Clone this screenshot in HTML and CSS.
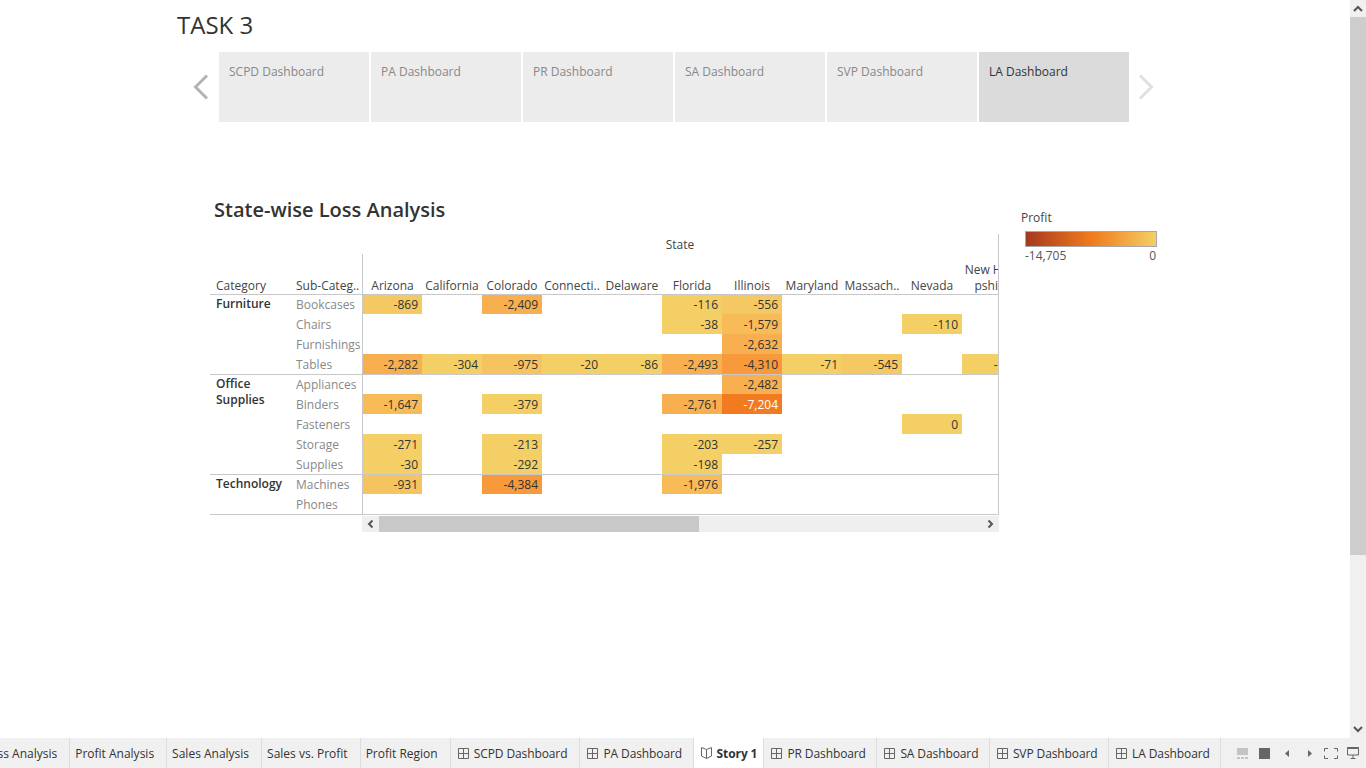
FILE: index.html
```html
<!DOCTYPE html>
<html lang="en">
<head>
    <meta charset="UTF-8">
    <meta name="viewport" content="width=device-width, initial-scale=1.0">
    <title>TASK 3</title>
    <link rel="stylesheet" href="styles.css">
</head>
<body>
    <div class="workspace">
        <main class="story">
            <h1 class="story-title">TASK 3</h1>

            <nav class="story-nav">
                <svg class="nav-arrow" width="18" height="26" viewBox="0 0 18 26"><path d="M15 1.5 L3.5 13 L15 24.5" fill="none" stroke="#b4b4b4" stroke-width="3"/></svg>
                <div class="tiles">
                    <a class="tile">SCPD Dashboard</a>
                    <a class="tile">PA Dashboard</a>
                    <a class="tile">PR Dashboard</a>
                    <a class="tile">SA Dashboard</a>
                    <a class="tile">SVP Dashboard</a>
                    <a class="tile active">LA Dashboard</a>
                </div>
                <svg class="nav-arrow next" width="18" height="26" viewBox="0 0 18 26"><path d="M3 1.5 L14.5 13 L3 24.5" fill="none" stroke="#e0e0e0" stroke-width="3"/></svg>
            </nav>

            <section class="dashboard">
                <div class="sheet">
                    <h2 class="sheet-title">State-wise Loss Analysis</h2>
                    <div class="crosstab">
                        <table>
                            <colgroup>
                                <col class="w-cat">
                                <col class="w-sub">
                                <col class="w-state-first">
                                <col span="10" class="w-state">
                            </colgroup>
                            <thead>
                                <tr class="field-row">
                                    <th colspan="2"></th>
                                    <th class="state-label" colspan="11">State</th>
                                </tr>
                                <tr class="head-row">
                                    <th class="left">Category</th>
                                    <th class="left divider">Sub-Categ..</th>
                                    <th>Arizona</th>
                                    <th>California</th>
                                    <th>Colorado</th>
                                    <th>Connecti..</th>
                                    <th>Delaware</th>
                                    <th>Florida</th>
                                    <th>Illinois</th>
                                    <th>Maryland</th>
                                    <th>Massach..</th>
                                    <th>Nevada</th>
                                    <th>New Ham<br>pshire</th>
                                </tr>
                            </thead>
                            <tbody>
                                <tr class="first">
                                    <td class="cat" rowspan="4">Furniture</td>
                                    <td class="sub">Bookcases</td>
                                    <td class="heat-2">-869</td><td></td><td class="heat-5">-2,409</td><td></td><td></td><td class="heat-1">-116</td><td class="heat-2">-556</td><td></td><td></td><td></td><td></td>
                                </tr>
                                <tr>
                                    <td class="sub">Chairs</td>
                                    <td></td><td></td><td></td><td></td><td></td><td class="heat-1">-38</td><td class="heat-4">-1,579</td><td></td><td></td><td class="heat-1">-110</td><td></td>
                                </tr>
                                <tr>
                                    <td class="sub">Furnishings</td>
                                    <td></td><td></td><td></td><td></td><td></td><td></td><td class="heat-5">-2,632</td><td></td><td></td><td></td><td></td>
                                </tr>
                                <tr>
                                    <td class="sub">Tables</td>
                                    <td class="heat-5">-2,282</td><td class="heat-1">-304</td><td class="heat-3">-975</td><td class="heat-1">-20</td><td class="heat-1">-86</td><td class="heat-5">-2,493</td><td class="heat-6">-4,310</td><td class="heat-1">-71</td><td class="heat-2">-545</td><td></td><td class="heat-1">-118</td>
                                </tr>
                                <tr class="first">
                                    <td class="cat" rowspan="5">Office<br>Supplies</td>
                                    <td class="sub">Appliances</td>
                                    <td></td><td></td><td></td><td></td><td></td><td></td><td class="heat-5">-2,482</td><td></td><td></td><td></td><td></td>
                                </tr>
                                <tr>
                                    <td class="sub">Binders</td>
                                    <td class="heat-4">-1,647</td><td></td><td class="heat-1">-379</td><td></td><td></td><td class="heat-5">-2,761</td><td class="heat-7">-7,204</td><td></td><td></td><td></td><td></td>
                                </tr>
                                <tr>
                                    <td class="sub">Fasteners</td>
                                    <td></td><td></td><td></td><td></td><td></td><td></td><td></td><td></td><td></td><td class="heat-1">0</td><td></td>
                                </tr>
                                <tr>
                                    <td class="sub">Storage</td>
                                    <td class="heat-1">-271</td><td></td><td class="heat-1">-213</td><td></td><td></td><td class="heat-1">-203</td><td class="heat-1">-257</td><td></td><td></td><td></td><td></td>
                                </tr>
                                <tr>
                                    <td class="sub">Supplies</td>
                                    <td class="heat-1">-30</td><td></td><td class="heat-1">-292</td><td></td><td></td><td class="heat-1">-198</td><td></td><td></td><td></td><td></td><td></td>
                                </tr>
                                <tr class="first">
                                    <td class="cat" rowspan="2">Technology</td>
                                    <td class="sub">Machines</td>
                                    <td class="heat-3">-931</td><td></td><td class="heat-6">-4,384</td><td></td><td></td><td class="heat-4">-1,976</td><td></td><td></td><td></td><td></td><td></td>
                                </tr>
                                <tr>
                                    <td class="sub">Phones</td>
                                    <td></td><td></td><td></td><td></td><td></td><td></td><td></td><td></td><td></td><td></td><td></td>
                                </tr>
                            </tbody>
                        </table>
                    </div>
                    <div class="hscroll">
                        <span class="hscroll-btn"><svg width="7" height="8" viewBox="0 0 7 8"><path d="M5.5 .5 L2 4 L5.5 7.5" fill="none" stroke="#555" stroke-width="2"/></svg></span>
                        <span class="hscroll-thumb"></span>
                        <span class="hscroll-btn end"><svg width="7" height="8" viewBox="0 0 7 8"><path d="M1.5 .5 L5 4 L1.5 7.5" fill="none" stroke="#555" stroke-width="2"/></svg></span>
                    </div>
                </div>

                <aside class="legend">
                    <div class="legend-title">Profit</div>
                    <div class="legend-ramp"></div>
                    <div class="legend-scale"><span>-14,705</span><span>0</span></div>
                </aside>
            </section>
        </main>

        <div class="vscroll">
            <span class="vscroll-btn"><svg width="10" height="7" viewBox="0 0 10 7"><path d="M1 6 L5 2 L9 6" fill="none" stroke="#555" stroke-width="2"/></svg></span>
            <span class="vscroll-thumb"></span>
            <span class="vscroll-btn"><svg width="10" height="7" viewBox="0 0 10 7"><path d="M1 1 L5 5 L9 1" fill="none" stroke="#555" stroke-width="2"/></svg></span>
        </div>
    </div>

    <footer class="tabbar">
        <div class="tabs">
            <a class="tab clipped">Loss Analysis</a>
            <a class="tab">Profit Analysis</a>
            <a class="tab">Sales Analysis</a>
            <a class="tab">Sales vs. Profit</a>
            <a class="tab">Profit Region</a>
            <a class="tab with-icon scpd"><svg class="tab-icon" width="11" height="11" viewBox="0 0 11 11"><path d="M.5 .5 H10.5 V10.5 H.5 Z M5.5 .5 V10.5 M.5 5.5 H10.5" fill="none" stroke="#666"/></svg>SCPD Dashboard</a>
            <a class="tab with-icon"><svg class="tab-icon" width="11" height="11" viewBox="0 0 11 11"><path d="M.5 .5 H10.5 V10.5 H.5 Z M5.5 .5 V10.5 M.5 5.5 H10.5" fill="none" stroke="#666"/></svg>PA Dashboard</a>
            <a class="tab with-icon current"><svg class="tab-icon" width="11" height="12" viewBox="0 0 11 12"><path d="M5.5 2.5 L.5 .5 V9 L5.5 11.5 L10.5 9 V.5 Z M5.5 2.5 V11.5" fill="none" stroke="#666"/></svg>Story 1</a>
            <a class="tab with-icon"><svg class="tab-icon" width="11" height="11" viewBox="0 0 11 11"><path d="M.5 .5 H10.5 V10.5 H.5 Z M5.5 .5 V10.5 M.5 5.5 H10.5" fill="none" stroke="#666"/></svg>PR Dashboard</a>
            <a class="tab with-icon"><svg class="tab-icon" width="11" height="11" viewBox="0 0 11 11"><path d="M.5 .5 H10.5 V10.5 H.5 Z M5.5 .5 V10.5 M.5 5.5 H10.5" fill="none" stroke="#666"/></svg>SA Dashboard</a>
            <a class="tab with-icon"><svg class="tab-icon" width="11" height="11" viewBox="0 0 11 11"><path d="M.5 .5 H10.5 V10.5 H.5 Z M5.5 .5 V10.5 M.5 5.5 H10.5" fill="none" stroke="#666"/></svg>SVP Dashboard</a>
            <a class="tab with-icon"><svg class="tab-icon" width="11" height="11" viewBox="0 0 11 11"><path d="M.5 .5 H10.5 V10.5 H.5 Z M5.5 .5 V10.5 M.5 5.5 H10.5" fill="none" stroke="#666"/></svg>LA Dashboard</a>
        </div>
        <div class="controls">
            <svg width="11" height="11" viewBox="0 0 11 11"><path d="M0 0 H11 V7 H0 Z" fill="#c4c4c4"/><path d="M0 9 H3 V11 H0 Z M4 9 H7 V11 H4 Z M8 9 H11 V11 H8 Z" fill="#c4c4c4"/></svg>
            <svg width="11" height="11" viewBox="0 0 11 11"><path d="M0 0 H11 V11 H0 Z" fill="#666"/></svg>
            <svg class="ctl-step" width="4" height="7" viewBox="0 0 4 7"><path d="M4 0 V7 L0 3.5 Z" fill="#666"/></svg>
            <svg class="ctl-step right" width="4" height="7" viewBox="0 0 4 7"><path d="M0 0 V7 L4 3.5 Z" fill="#666"/></svg>
            <svg class="ctl-full" width="14" height="11" viewBox="0 0 14 11"><path d="M.5 3.5 V.5 H4 M10 .5 H13.5 V3.5 M13.5 7.5 V10.5 H10 M4 10.5 H.5 V7.5" fill="none" stroke="#666"/></svg>
            <svg class="ctl-screen" width="12" height="12" viewBox="0 0 12 12"><path d="M.5 1.5 H11.5 V8 H.5 Z" fill="none" stroke="#666"/><path d="M0 0 H12 V1 H0 Z M5.5 8 H6.5 V11 H5.5 Z M3.5 11 H8.5 V12 H3.5 Z" fill="#666"/></svg>
        </div>
    </footer>
</body>
</html>
```

FILE: styles.css
```css
* {
    box-sizing: border-box;
}
body {
    margin: 0;
    height: 768px;
    overflow: hidden;
    display: flex;
    flex-direction: column;
    background: white;
    font-family: "Open Sans", sans-serif;
    font-size: 12px;
    color: #333;
}
.workspace {
    display: flex;
    height: 738px;
}
.story {
    flex: 1;
    padding-left: 177px;
}
.story-title {
    margin: 0;
    height: 52px;
    padding-top: 8px;
    font-size: 24px;
    line-height: 33px;
    font-weight: 400;
    color: #333;
}

/* story points */
.story-nav {
    display: flex;
    align-items: center;
    height: 70px;
    padding-left: 15px;
}
.nav-arrow {
    margin-right: 9px;
    flex: none;
}
.nav-arrow.next {
    margin: 0 0 0 8px;
}
.tiles {
    display: flex;
    gap: 2px;
}
.tile {
    width: 150px;
    height: 70px;
    padding: 11px 10px;
    background: #ececec;
    color: #888;
    line-height: 17px;
}
.tile.active {
    background: #dbdbdb;
    color: #333;
}

/* dashboard */
.dashboard {
    display: flex;
    margin: 74px 0 0 33px;
}
.sheet {
    width: 789px;
}
.sheet-title {
    margin: 0;
    padding-left: 4px;
    height: 38px;
    font-size: 20px;
    line-height: 28px;
    font-weight: 600;
    color: #333;
}
.crosstab {
    width: 789px;
    overflow: hidden;
    border-right: 1px solid #c8c8c8;
}
table {
    table-layout: fixed;
    width: 812px;
    border-collapse: separate;
    border-spacing: 0;
    border-bottom: 1px solid #c8c8c8;
}
.w-cat {
    width: 80px;
}
.w-sub {
    width: 73px;
}
.w-state-first {
    width: 59px;
}
.w-state {
    width: 60px;
}
th {
    padding: 0;
    font-weight: 400;
    line-height: 16px;
    color: #444;
    white-space: nowrap;
    vertical-align: bottom;
}
.field-row th {
    height: 20px;
    padding-top: 1px;
    vertical-align: middle;
}
.state-label {
    padding-right: 25px;
}
.head-row th {
    height: 40px;
    overflow: hidden;
}
th.left {
    text-align: left;
    padding-left: 6px;
}
.divider,
td.sub {
    border-right: 1px solid #c8c8c8;
}
td {
    height: 20px;
    padding: 1px 4px 0 0;
    text-align: right;
    line-height: 16px;
    color: #333;
    white-space: nowrap;
}
tr.first td {
    border-top: 1px solid #c8c8c8;
}
td.cat {
    padding: 1px 0 0 6px;
    text-align: left;
    vertical-align: top;
    font-weight: 600;
    color: #333;
}
td.sub {
    padding: 1px 0 0 6px;
    text-align: left;
    color: #888;
    overflow: hidden;
}
.heat-1 { background: #f3cf66; }
.heat-2 { background: #f4c963; }
.heat-3 { background: #f5c461; }
.heat-4 { background: #f7bb58; }
.heat-5 { background: #f8af4f; }
.heat-6 { background: #f89a3c; }
.heat-7 { background: #f27a20; color: white; }

.hscroll {
    display: flex;
    margin: 1px 0 0 152px;
    height: 16px;
    background: #efefef;
}
.hscroll-btn {
    width: 17px;
    display: flex;
    align-items: center;
    justify-content: center;
}
.hscroll-btn.end {
    margin-left: auto;
}
.hscroll-thumb {
    width: 320px;
    background: #c8c8c8;
}

/* legend */
.legend {
    margin: 14px 0 0 22px;
    width: 140px;
}
.legend-title {
    height: 21px;
    line-height: 16px;
    color: #444;
}
.legend-ramp {
    margin-left: 4px;
    width: 132px;
    height: 16px;
    border: 1px solid #a8a8a8;
    background: linear-gradient(to right, #a5391e, #f07a1c 50%, #f3cf66);
}
.legend-scale {
    margin-left: 4px;
    width: 131px;
    display: flex;
    justify-content: space-between;
    line-height: 18px;
    color: #555;
}

/* scrollbars */
.vscroll {
    flex: none;
    width: 16px;
    display: flex;
    flex-direction: column;
    background: #f0f0f0;
}
.vscroll-btn {
    height: 17px;
    display: flex;
    align-items: center;
    justify-content: center;
}
.vscroll-thumb {
    height: 538px;
    background: #cdcdcd;
}
.vscroll-btn:last-child {
    margin-top: auto;
}

/* bottom tabs */
.tabbar {
    flex: none;
    height: 30px;
    display: flex;
    justify-content: space-between;
    background: #f0f0f0;
    overflow: hidden;
}
.tabs {
    display: flex;
}
.tab {
    display: flex;
    align-items: center;
    height: 30px;
    padding: 0 12px 0 5px;
    border-right: 1px solid #dedede;
    white-space: nowrap;
    color: #333;
}
.tab.clipped {
    margin-left: -21px;
}
.tab.with-icon {
    padding: 0 10.5px 0 7px;
    letter-spacing: -0.1px;
}
.tab.scpd {
    padding-right: 12px;
}
.tab-icon {
    margin-right: 5px;
}
.tab.current {
    padding-right: 6px;
    background: white;
    font-weight: 700;
}
.controls {
    display: flex;
    align-items: center;
    gap: 11px;
    padding-right: 7px;
}
.ctl-step {
    margin-left: 4px;
}
.ctl-step.right {
    margin-left: 8px;
}
.ctl-full {
    margin-left: 1px;
}
.ctl-screen {
    margin-left: -2px;
}
```
